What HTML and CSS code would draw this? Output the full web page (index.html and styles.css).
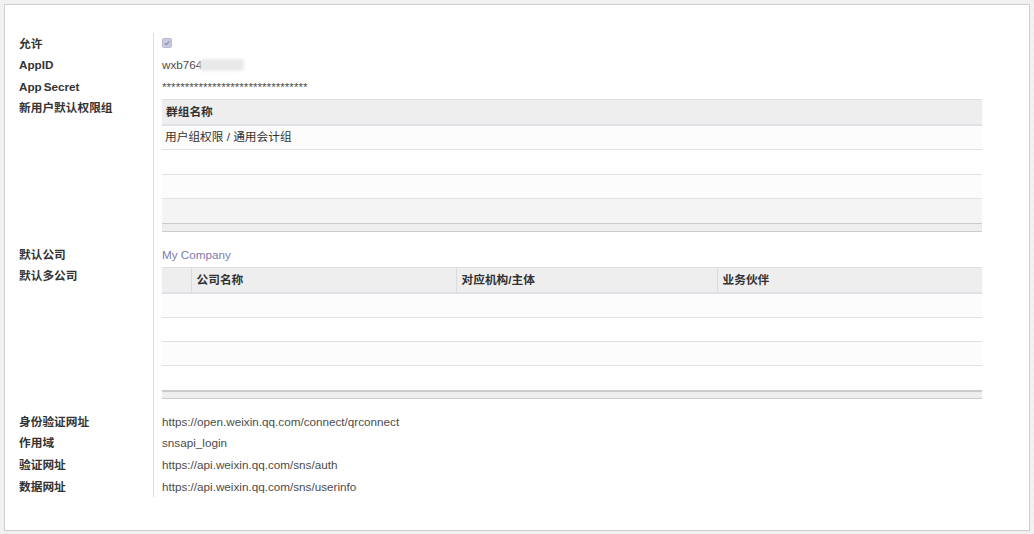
FILE: index.html
```html
<!DOCTYPE html>
<html lang="zh-CN">
<head>
<meta charset="utf-8">
<title>微信登录设置</title>
<link rel="stylesheet" href="styles.css">
</head>
<body>
<div class="sheet">
  <div class="form">
    <div class="label">允许</div>
    <div class="value">
      <svg class="check" width="10" height="10" viewBox="0 0 10 10"><rect x="0.5" y="0.5" width="9" height="9" rx="1.5" fill="#c9c9df" stroke="#b9b9d2"/><path d="M2.8 5.2 L4.3 6.6 L7.2 3.4" fill="none" stroke="#8a8ab0" stroke-width="1.1"/></svg>
    </div>

    <div class="label">AppID</div>
    <div class="value">wxb764<span class="blur"></span></div>

    <div class="label">App<span class="gap">Secret</span></div>
    <div class="value">********************************</div>

    <div class="label">新用户默认权限组</div>
    <div class="value">
      <table class="grid g1">
        <thead><tr><th>群组名称</th></tr></thead>
        <tbody>
          <tr><td>用户组权限 / 通用会计组</td></tr>
          <tr class="tall"><td></td></tr>
          <tr><td></td></tr>
          <tr class="last"><td></td></tr>
        </tbody>
        <tfoot><tr><td></td></tr></tfoot>
      </table>
    </div>

    <div class="label">默认公司</div>
    <div class="value"><span class="link">My Company</span></div>

    <div class="label">默认多公司</div>
    <div class="value">
      <table class="grid g2">
        <colgroup><col class="c0"><col class="c1"><col class="c2"><col></colgroup>
        <thead><tr><th></th><th>公司名称</th><th>对应机构/主体</th><th>业务伙伴</th></tr></thead>
        <tbody>
          <tr><td></td><td></td><td></td><td></td></tr>
          <tr><td></td><td></td><td></td><td></td></tr>
          <tr><td></td><td></td><td></td><td></td></tr>
          <tr><td></td><td></td><td></td><td></td></tr>
        </tbody>
        <tfoot><tr><td colspan="4"></td></tr></tfoot>
      </table>
    </div>

    <div class="label">身份验证网址</div>
    <div class="value">https://open.weixin.qq.com/connect/qrconnect</div>

    <div class="label">作用域</div>
    <div class="value">snsapi_login</div>

    <div class="label">验证网址</div>
    <div class="value">https://api.weixin.qq.com/sns/auth</div>

    <div class="label">数据网址</div>
    <div class="value">https://api.weixin.qq.com/sns/userinfo</div>
  </div>
</div>
</body>
</html>
```
FILE: styles.css
```css
html, body {
  margin: 0;
  padding: 0;
}
body {
  width: 1034px;
  height: 534px;
  overflow: hidden;
  background: repeating-conic-gradient(#ececec 0 25%, #f6f6f6 0 50%) 0 0 / 2px 2px;
  font-family: "Liberation Sans", "Noto Sans CJK SC", sans-serif;
  font-size: 11.7px;
  color: #4c4c4c;
}
.sheet {
  box-sizing: border-box;
  margin: 4px;
  width: 1026px;
  height: 527px;
  background: #fff;
  border: 1px solid #cfcfcf;
  box-shadow: 0 0 1px rgba(0,0,0,0.08);
  padding-top: 27.5px;
}
.form {
  display: grid;
  grid-template-columns: 148px 1fr;
  line-height: 21.6px;
}
.label {
  padding-left: 14px;
  font-weight: bold;
  color: #333;
}
.gap {
  margin-left: 2px;
}
.value {
  border-left: 1px solid #dcdcdc;
  padding-left: 8px;
  padding-right: 47px;
  min-height: 21.6px;
}
.check {
  display: inline-block;
  vertical-align: middle;
  margin-top: -3px;
}
.blur {
  display: inline-block;
  width: 44px;
  height: 12px;
  vertical-align: middle;
  background: #e9e9e9;
  border-radius: 3px;
  filter: blur(1.5px);
  margin-left: -2px;
  margin-top: -2px;
}
.link {
  color: #7c7bad;
}
.grid {
  width: 100%;
  border-collapse: collapse;
  table-layout: fixed;
  margin: 1.5px 0 12px;
  line-height: 16px;
}
.g2 {
  margin-top: 1.5px;
}
.grid thead th {
  height: 24px;
  padding: 0 4px;
  background: #eeeeee;
  border-top: 1px solid #dfdfdf;
  border-bottom: 2px solid #dee2e6;
  text-align: left;
  font-weight: bold;
  color: #333;
}
.g2 thead th + th {
  border-left: 1px solid #dcdcdc;
  padding-left: 5px;
}
.g2 .c0 { width: 29px; }
.g2 .c1 { width: 265px; }
.g2 .c2 { width: 261px; }
.grid tbody td {
  height: 23px;
  padding: 0 3px;
  border-bottom: 1px solid #e2e2e2;
  color: #333;
}
.grid tbody tr.tall td {
  height: 24px;
}
.grid tbody tr:nth-child(odd) td {
  background: #fcfcfc;
}
.grid tbody tr:nth-child(even) td {
  background: #fff;
}
.grid tbody tr:last-child td {
  border-bottom: 0;
  height: 24px;
}
.g1 tbody tr.last td {
  background: #f4f4f4;
}
.grid tfoot td {
  height: 6px;
  padding: 0;
  background: #eeeeee;
  border-top: 2px solid #cacaca;
  border-bottom: 1px solid #cccccc;
}
.g1 tfoot td {
  border-top-width: 1px;
  height: 7px;
}
```
